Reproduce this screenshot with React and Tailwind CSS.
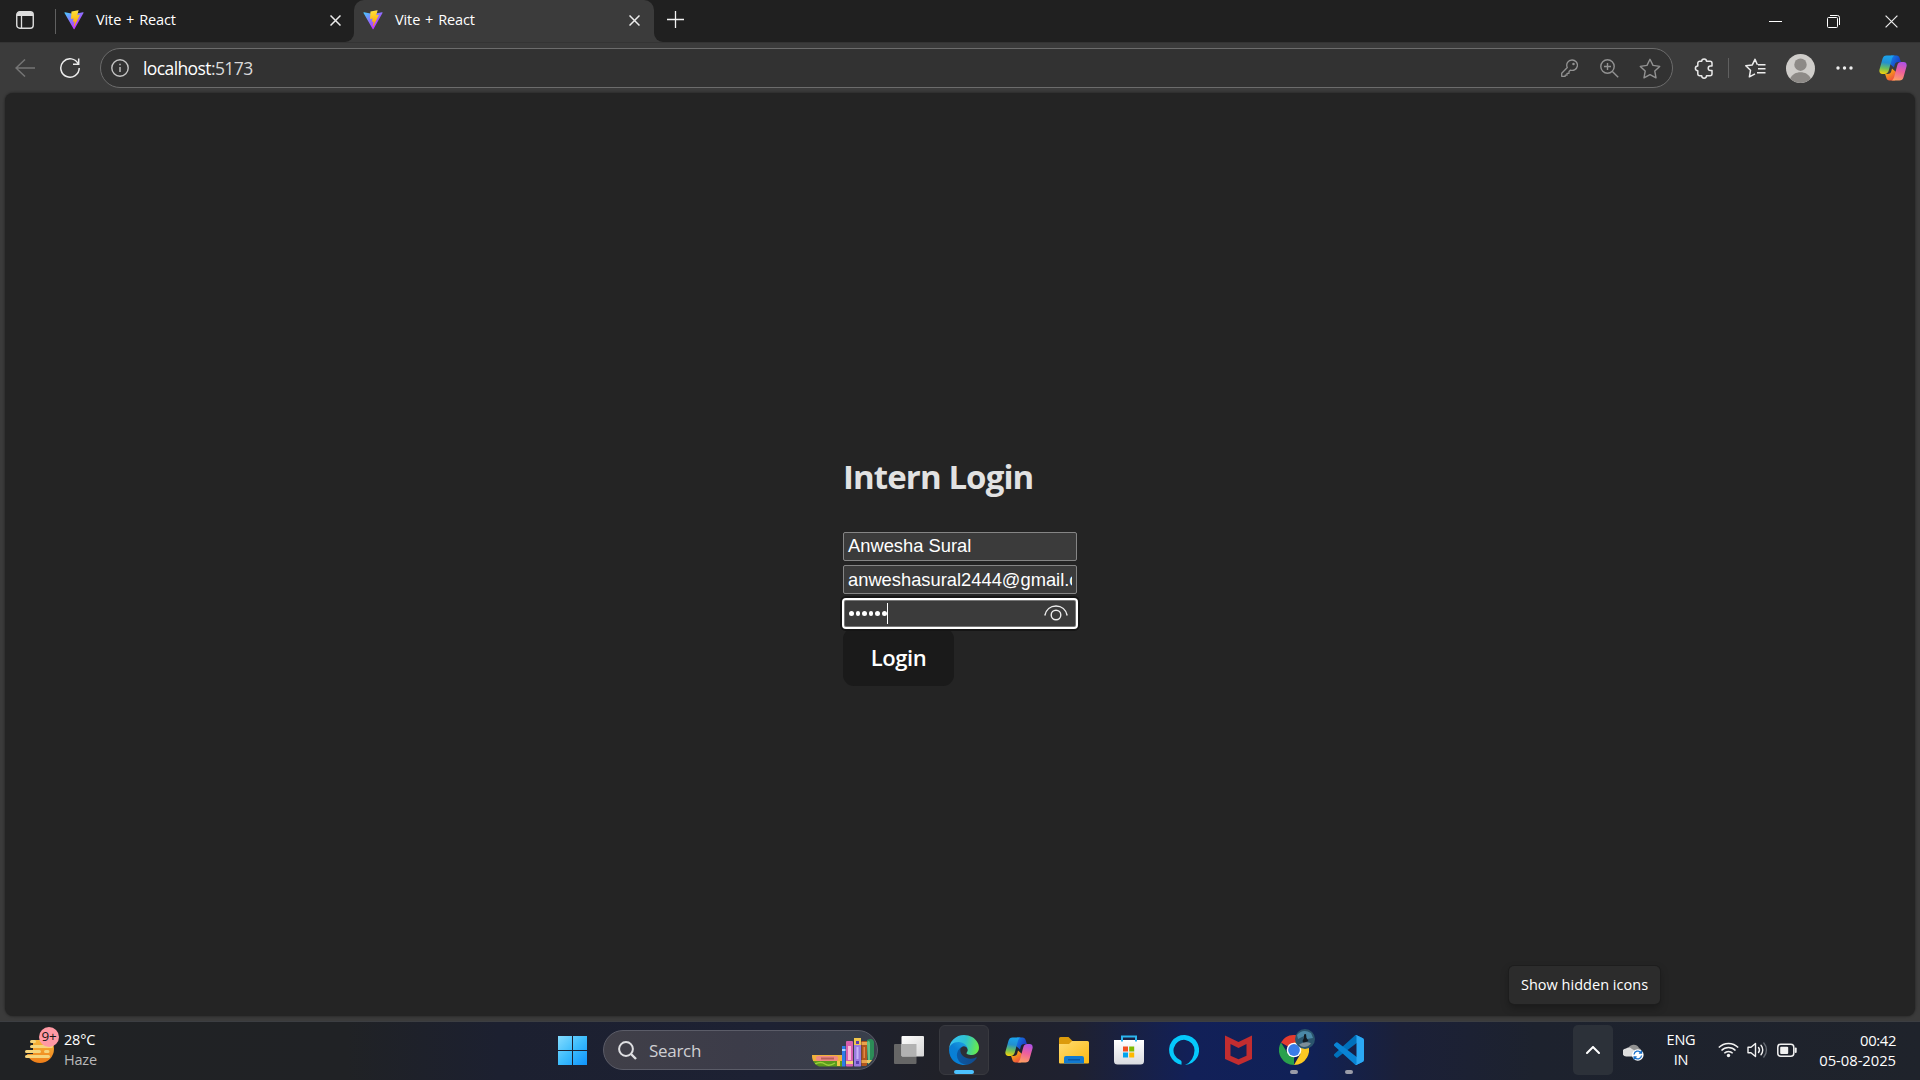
import React from "react";

const UI = "font-['Open_Sans','Noto_Sans',sans-serif]";

function ViteLogo({ id }) {
  return (
    <svg width="20" height="20" viewBox="0 0 410 404" className="shrink-0">
      <defs>
        <linearGradient id={`${id}a`} x1="6" y1="33" x2="235" y2="344" gradientUnits="userSpaceOnUse">
          <stop stopColor="#41D1FF" />
          <stop offset="1" stopColor="#BD34FE" />
        </linearGradient>
        <linearGradient id={`${id}b`} x1="194.651" y1="8.818" x2="236.076" y2="292.989" gradientUnits="userSpaceOnUse">
          <stop stopColor="#FFEA83" />
          <stop offset="0.083" stopColor="#FFDD35" />
          <stop offset="1" stopColor="#FFA800" />
        </linearGradient>
      </defs>
      <path d="M399.641 59.525 215.643 388.545C211.844 395.338 202.084 395.378 198.228 388.618L10.582 59.556C6.381 52.19 12.68 43.267 21.028 44.759L205.223 77.682C206.398 77.892 207.601 77.89 208.776 77.676L389.119 44.806C397.439 43.289 403.768 52.143 399.641 59.525Z" fill={`url(#${id}a)`} />
      <path d="M292.965 1.574 156.801 28.255C154.563 28.694 152.906 30.59 152.771 32.866L144.395 174.33C144.198 177.662 147.258 180.248 150.51 179.498L188.42 170.749C191.967 169.931 195.172 173.055 194.443 176.622L183.18 231.775C182.422 235.487 185.907 238.661 189.532 237.56L212.947 230.446C216.577 229.344 220.065 232.527 219.297 236.242L201.398 322.875C200.278 328.294 207.486 331.249 210.492 326.603L212.5 323.5 323.454 102.072C325.312 98.365 322.108 94.137 318.036 94.923L279.014 102.454C275.347 103.161 272.227 99.746 273.262 96.158L298.731 7.867C299.767 4.273 296.636.855 292.965 1.574Z" fill={`url(#${id}b)`} />
    </svg>
  );
}

function CopilotLogo({ id }) {
  return (
    <svg width="28" height="26" viewBox="0 0 28 26">
      <defs>
        <linearGradient id={`${id}a`} x1="8" y1="0" x2="5" y2="19" gradientUnits="userSpaceOnUse">
          <stop stopColor="#1aa5f0" />
          <stop offset="0.4" stopColor="#2390d0" />
          <stop offset="0.7" stopColor="#6cbf5a" />
          <stop offset="1" stopColor="#f5d20a" />
        </linearGradient>
        <linearGradient id={`${id}b`} x1="23" y1="6" x2="17" y2="26" gradientUnits="userSpaceOnUse">
          <stop stopColor="#a850ee" />
          <stop offset="0.5" stopColor="#ee5f9c" />
          <stop offset="1" stopColor="#ffa45e" />
        </linearGradient>
        <linearGradient id={`${id}c`} x1="14" y1="2" x2="21" y2="6" gradientUnits="userSpaceOnUse">
          <stop stopColor="#1672e0" />
          <stop offset="1" stopColor="#1b3fc4" />
        </linearGradient>
        <linearGradient id={`${id}d`} x1="8" y1="18" x2="13" y2="25" gradientUnits="userSpaceOnUse">
          <stop stopColor="#f6a416" />
          <stop offset="1" stopColor="#f0523c" />
        </linearGradient>
      </defs>
      <path d="M12 .500h5.600c1.600 0 2.600 1 3 2.400l1.300 4.200h-2.700c-1.800 0-3 1-3.500 2.700L15 12.500 11 9Z" fill={`url(#${id}c)`} />
      <path d="M16 25.500h-5.600c-1.600 0-2.600-1-3-2.400l-1.300-4.200h2.700c1.800 0 3-1 3.500-2.700L13 13.500 17 17Z" fill={`url(#${id}d)`} />
      <path d="M7.500.500h8.500c-1.600.200-2.500 1.500-3 3l-3.300 12.200c-.600 2-1.900 3.200-4 3.200H3.400C1 18.900-.100 17 .500 14.500L3.500 3.800C4.100 1.700 5.400.500 7.500.500Z" fill={`url(#${id}a)`} />
      <path d="M20.500 25.500h-8.500c1.600-.200 2.500-1.500 3-3l3.300-12.200c.600-2 1.900-3.200 4-3.200h2.300c2.400 0 3.500 1.900 2.900 4.400l-3 10.700c-.600 2.100-1.900 3.300-4 3.300Z" fill={`url(#${id}b)`} />
    </svg>
  );
}

function CloseIcon({ size = 11, w = 1.5 }) {
  return (
    <svg width={size} height={size} viewBox="0 0 11 11" stroke="#ececec" strokeWidth={w} fill="none">
      <path d="M.5.5l10 10M10.500.500l-10 10" />
    </svg>
  );
}

function TabStrip() {
  return (
    <header className="flex h-[42px] shrink-0 items-start bg-[#202020]">
      <div className="flex h-[42px] w-[55px] items-center pb-[2px] pl-4">
        <svg width="18" height="18" viewBox="0 0 18 18" fill="none">
          <rect x=".75" y=".75" width="16.500" height="16.500" rx="3" stroke="#dedede" strokeWidth="1.400" />
          <path d="M1 3.500Q1 1 3.500 1h11Q17 1 17 3.500V5H1Z" fill="#dedede" />
          <path d="M5.500 5v12" stroke="#dedede" strokeWidth="1.300" />
        </svg>
      </div>
      <div className="mt-[9px] h-[25px] w-px bg-[#606060]" />
      <div className="flex h-[40px] w-[298px] items-center pl-2 pr-[13px]">
        <ViteLogo id="va" />
        <span className={`${UI} ml-3 flex-1 whitespace-nowrap text-[14.5px] leading-5 tracking-[-0.1px] text-white [word-spacing:1.2px]`}>Vite + React</span>
        <CloseIcon />
      </div>
      <div className="relative flex h-[42px] w-[300px] items-center rounded-t-[10px] bg-[#3b3b3b] pb-[2px] pl-[9px] pr-[14px]">
        <div className="absolute -left-[10px] bottom-0 size-[10px] bg-[#3b3b3b]"><div className="size-full rounded-br-[9px] bg-[#202020]" /></div>
        <div className="absolute -right-[10px] bottom-0 size-[10px] bg-[#3b3b3b]"><div className="size-full rounded-bl-[9px] bg-[#202020]" /></div>
        <ViteLogo id="vb" />
        <span className={`${UI} ml-3 flex-1 whitespace-nowrap text-[14.5px] leading-5 tracking-[-0.1px] text-white [word-spacing:1.2px]`}>Vite + React</span>
        <CloseIcon />
      </div>
      <svg className="ml-[13px] mt-[11px]" width="17" height="17" viewBox="0 0 17 17" stroke="#f2f2f2" strokeWidth="1.300"><path d="M8.500 0v17M0 8.500h17" /></svg>
      <div className="ml-auto flex items-center pr-[22px] pt-[15px]">
        <div className="mr-[45px] mt-[-1px] h-px w-[13px] bg-white" />
        <svg className="mr-[45px]" width="13" height="13" viewBox="0 0 13 13" fill="none" stroke="#fff">
          <rect x=".5" y="2.500" width="10" height="10" rx="1" />
          <path d="M3 .5h7.500q2 0 2 2V10" />
        </svg>
        <CloseIcon size={13} w={1.05} />
      </div>
    </header>
  );
}

function Toolbar() {
  return (
    <div className="flex h-[51px] shrink-0 items-center border-t border-[#343434] bg-[#3b3b3b]">
      <svg className="ml-[15px]" width="20" height="18" viewBox="0 0 20 18" fill="none" stroke="#757575" strokeWidth="1.500"><path d="M20 9H1M10 .5 1 9l9 8.500" /></svg>
      <svg className="ml-[25px]" width="20" height="20" viewBox="0 0 20 20" fill="none" stroke="#ededed" strokeWidth="1.500">
        <path d="M18.300 6A9.200 9.200 0 1 0 19.200 10" /><path d="M18.700.500v5.700h-5.700" />
      </svg>
      <div className="ml-5 flex h-[40px] w-[1573px] items-center rounded-full border border-[#6c6c6c] bg-[#323232] pl-[10px] pr-[11px]">
        <svg width="18" height="18" viewBox="0 0 18 18" fill="none" stroke="#c4c4c4" strokeWidth="1.400"><circle cx="9" cy="9" r="8.200" /><path d="M9 8v5M9 4.700v1.600" /></svg>
        <span className={`${UI} -mt-px ml-[14px] flex-1 whitespace-nowrap text-[17.5px] leading-6 tracking-[-0.6px] text-[#d9d9d9]`}>
          <span className="text-white">localhost</span>:5173
        </span>
        <svg width="17" height="18" viewBox="0 0 17 18" fill="none" stroke="#929292" strokeWidth="1.300" strokeLinejoin="round">
          <path d="M11 1a5.200 5.200 0 1 1-1.500 10.100L8 12.500v1.800H6v1.900H4.200v1.100H.700v-3l5.600-5.800A5.200 5.200 0 0 1 11 1Z" /><circle cx="12.500" cy="5" r=".6" fill="#929292" />
        </svg>
        <svg className="ml-[22px]" width="19" height="19" viewBox="0 0 19 19" fill="none" stroke="#929292" strokeWidth="1.400"><circle cx="7.500" cy="7.500" r="6.700" /><path d="m12.400 12.400 5.800 5.800M7.500 4v7M4 7.500h7" /></svg>
        <svg className="ml-[20px]" width="22" height="21" viewBox="0 0 22 21" fill="none" stroke="#929292" strokeWidth="1.400" strokeLinejoin="round"><path d="m11 1.300 3 6.100 6.700 1-4.900 4.700 1.200 6.700-6-3.200-6 3.200 1.200-6.700L1.300 8.400l6.700-1Z" /></svg>
      </div>
      <svg className="ml-[21px]" width="20" height="21" viewBox="0 0 20 21" fill="none" stroke="#e8e8e8" strokeWidth="1.500" strokeLinejoin="round">
        <path d="M5.800 3.300H7.700a2.400 2.400 0 0 1 4.800 0H16a2 2 0 0 1 2 2V8H16.500a2.300 2.300 0 0 0 0 4.600H18V15.800a2 2 0 0 1-2 2H12.500a2.400 2.400 0 0 1-4.800 0H5.800a2 2 0 0 1-2-2V12.700a2.400 2.400 0 0 1 0-4.800V5.300a2 2 0 0 1 2-2Z" />
      </svg>
      <div className="ml-[14px] h-5 w-px bg-[#606060]" />
      <svg className="ml-[16px]" width="21" height="20" viewBox="0 0 21 20" fill="none" stroke="#ededed" strokeWidth="1.500" strokeLinejoin="round">
        <path d="M12.400 6.700 10 1.300 7.300 6.900l-6.500.900 4.700 4.500-1.100 6.500 5.600-2.900M13 6.700h7.500M13 10.700h7.500M12 14.700h8.500" />
      </svg>
      <svg className="ml-5" width="29" height="29" viewBox="0 0 28 28">
        <circle cx="14" cy="14" r="14" fill="#cfcdca" /><circle cx="14" cy="10.300" r="6" fill="#8d8a87" /><path d="M4 23.700c2-4 5.700-6 10-6s8 2 10 6a14 14 0 0 1-20 0Z" fill="#8d8a87" />
      </svg>
      <svg className="ml-[21px]" width="17" height="4" viewBox="0 0 17 4" fill="#eee"><circle cx="2" cy="2" r="1.700" /><circle cx="8.500" cy="2" r="1.700" /><circle cx="15" cy="2" r="1.700" /></svg>
      <div className="ml-[26px]"><CopilotLogo id="ca" /></div>
    </div>
  );
}

function LoginForm() {
  const field = "flex h-[29px] w-[234px] items-center overflow-hidden rounded-[2px] border border-[#858585] bg-[#3b3b3b] px-1 font-['Liberation_Sans',Arial,sans-serif] text-[18.33px] leading-[26px] text-white";
  return (
    <main className="flex flex-1 flex-col rounded-lg bg-[#242424] pl-[838px] pt-[354px] shadow-[0_0_3px_rgba(0,0,0,0.5)]">
      <h2 className={`${UI} h-[85px] whitespace-nowrap text-[33px] font-bold leading-[60px] tracking-[-0.9px] text-[#e2e2e2]`}>Intern Login</h2>
      <div className={`${field}`}><span className="-mt-[2px] whitespace-nowrap">Anwesha Sural</span></div>
      <div className={`${field} mt-[4px]`}><div className="w-full overflow-hidden whitespace-nowrap">anweshasural2444@gmail.com</div></div>
      <div className="relative z-10 mt-[4px] flex h-[31px] w-[236px] -translate-x-px items-center rounded-[4px] border-2 border-white bg-[#3b3b3b] pl-[5px] shadow-[inset_0_0_0_1px_#777,0_0_0_2px_#151515]">
        <div className="flex gap-[2px]">
          {[0, 1, 2, 3, 4, 5].map((i) => <i key={i} className="size-[4.600px] rounded-full bg-white" />)}
        </div>
        <div className="h-[21px] w-px bg-white" />
        <svg className="-mt-px ml-auto mr-[8px]" width="24" height="16" viewBox="0 0 24 16" fill="none" stroke="#ededed" strokeWidth="1.400"><path d="M.800 10.500C2 4.500 6.500 1 12 1s10 3.500 11.200 9.500" /><circle cx="12" cy="10" r="4.800" /></svg>
      </div>
      <button type="button" className={`${UI} -mt-px h-[58px] w-[111px] rounded-[11px] bg-[#1a1a1a] text-[22px] font-semibold tracking-[-0.4px] text-white`}>Login</button>
    </main>
  );
}

function Books() {
  return (
    <svg width="63" height="30" viewBox="0 0 63 30">
      <defs><clipPath id="pill"><path d="M0 0h63v12c0 9-6 14-10 16.500H7C3 27 0 23 0 18Z" /></clipPath></defs>
      <g clipPath="url(#pill)">
        <rect x="0" y="17" width="30" height="6" fill="#f2b13c" /><rect x="4" y="18" width="22" height="5" rx="2" fill="#f08a82" /><rect x="9" y="19.500" width="13" height="2" fill="#b9605c" />
        <rect x="1" y="23" width="29" height="6" fill="#5a9a1c" /><path d="M3 26q6-3 10 0t10-1" stroke="#9bd03c" strokeWidth="1.500" fill="none" /><rect x="25" y="23" width="3" height="5" fill="#f3c749" />
        <rect x="30" y="8" width="3.500" height="21" fill="#2f7be8" /><rect x="30" y="11" width="3.500" height="2" fill="#a8d3ff" />
        <rect x="34" y="3" width="7" height="26" rx="1" fill="#d95fae" /><rect x="36" y="8" width="3" height="14" fill="#f8b9d9" /><rect x="34" y="23" width="7" height="3" fill="#f5d275" />
        <rect x="42" y="0" width="7" height="29" rx="1" fill="#9b7be0" /><rect x="42" y="0" width="7" height="7" fill="#f1c64c" /><rect x="44" y="3" width="3" height="3" fill="#5c3eb0" /><rect x="44.500" y="9" width="2" height="12" fill="#c8b3f7" /><rect x="44" y="23" width="3" height="3" fill="#5c3eb0" />
        <rect x="49.500" y="3" width="5.500" height="25" fill="#b1571d" /><rect x="49.500" y="4" width="5.500" height="3" fill="#e8a34d" /><rect x="49.500" y="22" width="5.500" height="3" fill="#e8a34d" /><rect x="51.500" y="9" width="1.500" height="11" fill="#e08b48" />
        <path d="M55 2q6-3 7 2v20l-6 3Z" fill="#2c8c57" /><path d="M55 4q3-3 3 2v19l-2 2Z" fill="#64c286" /><path d="M55 22h5v3h-5Z" fill="#e8c765" />
      </g>
    </svg>
  );
}

function Cell({ children, mark }) {
  return (
    <div className="relative flex h-[50px] w-[55px] shrink-0 items-center justify-center">
      {children}
      {mark && <i className="absolute bottom-[1px] h-[4px] w-[8px] rounded-full bg-[#9a9ca8]" />}
    </div>
  );
}

function Taskbar() {
  return (
    <footer className={`${UI} flex h-[59px] shrink-0 items-start border-t border-[#3c3e42] bg-[linear-gradient(90deg,#202224_0%,#202225_18%,#1c2030_26%,#1d2133_40%,#202128_49%,#1f2130_56%,#122058_62%,#102157_68%,#1b2038_73%,#1d222e_80%,#1f232b_100%)] pt-[3px] text-white`}>
      <div className="flex w-[545px] pl-6 pt-[3px]">
        <div className="relative h-[36px] w-[40px]">
          <svg width="36" height="38" viewBox="0 0 36 38">
            <defs><linearGradient id="sun" x1="0" y1="0" x2="0" y2="1"><stop stopColor="#f9c343" /><stop offset="1" stopColor="#ee7d18" /></linearGradient></defs>
            <circle cx="16" cy="21" r="14" fill="url(#sun)" />
            <path d="M0 0h36v12H0ZM0 12h9v14H0Z" fill="#202224" />
            <path d="M7.500 13.500h3M7.500 18.500h20M2.500 23.500h13M21.500 23.500h2.500M2.500 28.500h22" stroke="#f6d57c" strokeWidth="3" strokeLinecap="round" />
          </svg>
          <span className="absolute -top-px left-[15px] flex size-5 items-center justify-center rounded-full bg-[#ff99a4] text-[13.5px] leading-none tracking-[-0.3px] text-[#161616]">9+</span>
        </div>
        <div className="flex flex-col whitespace-nowrap pt-[2px] text-[14.5px] leading-5 tracking-[-0.2px]">
          <span>28°C</span><span className="text-[#b9b9ba]">Haze</span>
        </div>
      </div>
      <Cell>
        <svg width="29" height="29" viewBox="0 0 29 29">
          <defs><linearGradient id="win" x1="0" y1="0" x2="1" y2="1"><stop stopColor="#85dcff" /><stop offset=".5" stopColor="#3cbcfc" /><stop offset="1" stopColor="#0f93fb" /></linearGradient></defs>
          <path d="M0 0h14v14H0ZM15 0h14v14H15ZM0 15h14v14H0ZM15 15h14v14H15Z" fill="url(#win)" />
        </svg>
      </Cell>
      <div className="ml-[3px] mr-[3.5px] mt-[5px] flex h-[40px] w-[275px] items-center rounded-full border border-[#5b5c68] bg-[linear-gradient(90deg,#403f48,#3c3c49_50%,#393f4c)] pl-[14px] pr-[2px]">
        <svg width="19" height="19" viewBox="0 0 19 19" fill="none" stroke="#dfdfe2" strokeWidth="2"><circle cx="8" cy="8" r="6.900" /><path d="m13 13 5 5" strokeWidth="2.400" /></svg>
        <span className="ml-[12px] mt-[2px] flex-1 text-[17px] leading-6 tracking-[-0.3px] text-[#cfcfd3]">Search</span>
        <div className="translate-y-[3px]"><Books /></div>
      </div>
      <Cell>
        <svg width="30" height="28" viewBox="0 0 30 28">
          <defs><linearGradient id="tv" x1="0" y1="0" x2="1" y2="1"><stop stopColor="#fff" /><stop offset="1" stopColor="#d5d5d5" /></linearGradient></defs>
          <rect x="0" y="8" width="22.500" height="20" rx="1" fill="#666" /><rect x="7.500" y="0" width="22.500" height="20.500" rx="1" fill="url(#tv)" /><rect x="7.500" y="8" width="15" height="12" fill="#b2b2b2" />
        </svg>
      </Cell>
      <Cell>
        <div className="relative flex size-[50px] items-center justify-center rounded-[6px] border border-[#38393f] bg-[#2d2e36]">
          <svg width="30" height="30" viewBox="0 0 256 256">
            <defs>
              <linearGradient id="e1" x1="63" y1="177" x2="241" y2="177" gradientUnits="userSpaceOnUse"><stop stopColor="#0c59a4" /><stop offset="1" stopColor="#114a8b" /></linearGradient>
              <linearGradient id="e2" x1="157" y1="94" x2="46" y2="222" gradientUnits="userSpaceOnUse"><stop stopColor="#1b9de2" /><stop offset=".5" stopColor="#0b7fd4" /><stop offset="1" stopColor="#0680d7" /></linearGradient>
              <linearGradient id="e3" x1="20" y1="60" x2="245" y2="110" gradientUnits="userSpaceOnUse"><stop stopColor="#35c1f1" /><stop offset=".5" stopColor="#2fc2cf" /><stop offset="1" stopColor="#66eb4e" /></linearGradient>
            </defs>
            <path fill="url(#e1)" d="M231 190.500c-3.400 1.800-6.900 3.400-10.500 4.700a101.700 101.700 0 0 1-35.900 6.500c-47.300 0-88.500-32.500-88.500-74.300a31.500 31.500 0 0 1 16.400-27.300c-42.800 1.800-53.800 46.400-53.800 72.500 0 73.900 68.100 81.400 82.800 81.400 7.900 0 19.800-2.300 27-4.600l1.300-.4a128.300 128.300 0 0 0 66.600-52.800 4 4 0 0 0-5.400-5.700Z" />
            <path fill="url(#e2)" d="M105.700 241.400a79.200 79.200 0 0 1-22.700-21.300 80.700 80.700 0 0 1 29.500-120c3.200-1.500 8.500-4.100 15.600-4a32.400 32.400 0 0 1 25.700 13 31.900 31.900 0 0 1 6.300 18.700c0-.2 24.500-79.600-80-79.600-43.900 0-80 41.700-80 78.200a130.200 130.200 0 0 0 12.100 56 128 128 0 0 0 156.400 67.100 75.500 75.500 0 0 1-62.800-8Z" />
            <path fill="url(#e3)" d="M152.300 148.900c-.9 1-3.400 2.500-3.400 5.600 0 2.600 1.700 5.200 4.800 7.300 14.300 10 41.400 8.600 41.500 8.600a59.600 59.600 0 0 0 30.300-8.300 61.400 61.400 0 0 0 30.400-52.900c.3-22.400-8-37.300-11.300-43.900C223.500 23.900 177.700 0 128 0A128 128 0 0 0 0 126.200c.5-36.500 36.800-66 80-66 3.500 0 23.500.3 42 10.100 16.300 8.600 24.900 18.900 30.800 29.200 6.200 10.700 7.300 24.100 7.300 29.500 0 5.300-2.700 13.300-7.800 19.900Z" />
          </svg>
          <i className="absolute bottom-0 h-[4px] w-5 rounded-full bg-[#4cc2ff]" />
        </div>
      </Cell>
      <Cell><CopilotLogo id="cb" /></Cell>
      <Cell>
        <svg className="mt-[1px]" width="30" height="27" viewBox="0 0 30 27">
          <defs><linearGradient id="fo" x1="0" y1="0" x2="1" y2="1"><stop stopColor="#ffdc72" /><stop offset="1" stopColor="#fcb912" /></linearGradient></defs>
          <path d="M0 1.500Q0 0 1.500 0h8l4 4H28v8H0Z" fill="#dc9b0c" /><path d="M0 7h10l3-3h15.500Q30 4 30 5.500V25.500Q30 26.500 29 26.500H1Q0 26.500 0 25.500Z" fill="url(#fo)" />
          <path d="M5 26.500V21q0-2 2-2h16q2 0 2 2v5.500Z" fill="#127ad0" /><path d="M9 22.800h12" stroke="#0a539f" strokeWidth="1.300" />
        </svg>
      </Cell>
      <Cell>
        <svg width="30" height="30" viewBox="0 0 30 30">
          <defs><linearGradient id="st" x1="0" y1="0" x2="0" y2="1"><stop stopColor="#fff" /><stop offset="1" stopColor="#d9dbe0" /></linearGradient></defs>
          <path d="M0 5h30V26q0 3.500-3.500 3.500h-23Q0 29.500 0 26Z" fill="url(#st)" /><path d="M8 6.500V1.500h14v5" fill="none" stroke="#2cb5ef" strokeWidth="2" />
          <path d="M9 11.500h5v5H9Z" fill="#f25022" /><path d="M15.200 11.500h5v5h-5Z" fill="#7fba00" /><path d="M9 17.500h5v5H9Z" fill="#00a4ef" /><path d="M15.200 17.500h5v5h-5Z" fill="#ffb900" />
        </svg>
      </Cell>
      <Cell>
        <svg width="30" height="30" viewBox="0 0 30 30"><path d="M12.500 29.800A15 15 0 1 1 16 30Q25 26 25.500 15.500A10.500 10.500 0 1 0 11.500 25.200Q12.600 25.700 12.600 27Z" fill="#05c8fb" /></svg>
      </Cell>
      <Cell>
        <svg className="-ml-px" width="27" height="30" viewBox="0 0 27 30"><path d="M0 .500 13.500 7 27 .500V24L13.500 30 0 24ZM5.500 9v11.700l8 3.600 8-3.600V9l-8 4Z" fill="#c22d30" fillRule="evenodd" /></svg>
      </Cell>
      <Cell mark>
        <svg width="30" height="30" viewBox="0 0 30 30">
          <path d="M15 15 2 7.500A15 15 0 0 1 28 7.500Z" fill="#e33b2e" /><path d="M15 15 15 30A15 15 0 0 1 2 7.500L8.800 18.600Z" fill="#2aa14c" /><path d="M15 15V7.500h13A15 15 0 0 1 15 30L21.500 18.700Z" fill="#fcc822" />
          <circle cx="15" cy="15" r="7.300" fill="#fff" /><circle cx="15" cy="15" r="5.900" fill="#3a7ce8" />
        </svg>
        <svg className="absolute left-[28.500px] top-[4px]" width="20" height="20" viewBox="0 0 20 20">
          <circle cx="10" cy="10" r="10" fill="#2b556d" /><path d="M2 6Q8-1 16 4l2 5-6 1-3-3-6 3Z" fill="#4a88a6" /><path d="M9 5.500 11 5l.5 4 2 3-5 2-1-2 1.500-3Z" fill="#131a22" /><path d="M4 15.500q5-3 10-2l2 1q-3 3.500-7 3.500-3 0-5-2.500Z" fill="#7c8e98" />
        </svg>
      </Cell>
      <Cell mark>
        <svg width="30" height="30" viewBox="0 0 100 100">
          <path d="M96.500 10.800 75.900.9a6.200 6.200 0 0 0-7.100 1.200L1.300 63.600a4.200 4.200 0 0 0 0 6.200l5.500 5a4.200 4.200 0 0 0 5.300.200L93.400 13.400A4.100 4.100 0 0 1 100 16.700v-.300a6.300 6.300 0 0 0-3.500-5.600Z" fill="#0071bb" />
          <path d="M96.500 89.200 75.900 99.100a6.200 6.200 0 0 1-7.100-1.200L1.300 36.400a4.200 4.200 0 0 1 0-6.200l5.500-5a4.200 4.200 0 0 1 5.300-.200L93.400 86.600A4.100 4.100 0 0 0 100 83.300v.3a6.300 6.300 0 0 1-3.500 5.600Z" fill="#0a84d4" />
          <path d="M75.900 99.100a6.200 6.200 0 0 1-7.100-1.200c2.300 2.300 6.200.7 6.200-2.600V4.700c0-3.300-3.900-4.900-6.200-2.600A6.200 6.200 0 0 1 75.900.900l20.600 9.900a6.300 6.300 0 0 1 3.500 5.600v67.200a6.300 6.300 0 0 1-3.500 5.600Z" fill="#2ba8f4" />
        </svg>
      </Cell>
      <div className="ml-auto flex h-[50px] items-center pr-6">
        <div className="flex h-[50px] w-10 items-center justify-center rounded-[5px] bg-[#2c3139]">
          <svg width="14" height="8" viewBox="0 0 14 8" fill="none" stroke="#fff" strokeWidth="2" strokeLinecap="round"><path d="m1 7 6-6 6 6" /></svg>
        </div>
        <svg className="ml-[10px] mt-[3px]" width="21" height="18" viewBox="0 0 21 18">
          <path d="M5 6a6 6 0 0 1 11-1 4 4 0 0 1 1 7H6Z" fill="#929292" /><path d="M4 13.500A4 4 0 0 1 3 5.500q3-2 6 .5l7 4v3.500Z" fill="#dedede" />
          <circle cx="14.800" cy="12" r="5.800" fill="#fff" /><path d="M11 11.500a4 4 0 0 1 7-2M18.600 12.500a4 4 0 0 1-7 2M18.500 7.500v2.600h-2.600M11.100 16.500v-2.600h2.600" fill="none" stroke="#176fc9" strokeWidth="1.300" />
        </svg>
        <div className="-mt-px ml-[22px] flex w-[30px] flex-col items-center text-[14.5px] leading-5 tracking-[-0.2px]"><span>ENG</span><span>IN</span></div>
        <svg className="ml-[22px]" width="21" height="16" viewBox="0 0 21 16" fill="none" stroke="#f1f1f1" strokeWidth="1.500">
          <path d="M.800 5.500a13.700 13.700 0 0 1 19.400 0M3.500 8.500a9.800 9.800 0 0 1 14 0M6.300 11.300a6 6 0 0 1 8.400 0" /><circle cx="10.500" cy="13.500" r="1.700" fill="#f1f1f1" stroke="none" />
        </svg>
        <svg className="ml-[8px]" width="21" height="18" viewBox="0 0 21 18" fill="none" stroke="#f1f1f1" strokeWidth="1.400" strokeLinejoin="round" strokeLinecap="round">
          <path d="M1 6.300h3L8.500 2.500v13L4 11.700H1ZM11.500 6.500a4 4 0 0 1 0 5M14 4.300a7.200 7.200 0 0 1 0 9.400" /><path d="M16.800 2a10.600 10.600 0 0 1 0 14" stroke="#666b73" />
        </svg>
        <svg className="ml-[9px]" width="20" height="15" viewBox="0 0 20 15" fill="none">
          <rect x=".8" y="1.300" width="16" height="12" rx="3" stroke="#f1f1f1" strokeWidth="1.500" /><rect x="3.200" y="3.700" width="8" height="7.300" rx="1" fill="#f1f1f1" /><path d="M18.700 5.500v3.500" stroke="#f1f1f1" strokeWidth="2" strokeLinecap="round" />
        </svg>
        <div className="-mt-px ml-[21px] flex w-[78px] flex-col items-end whitespace-nowrap text-[14.8px] leading-5 tracking-[-0.05px]"><span className="tracking-[-0.35px]">00:42</span><span>05-08-2025</span></div>
      </div>
    </footer>
  );
}

export default function App() {
  return (
    <div className="relative flex h-[1080px] w-[1920px] flex-col overflow-hidden bg-[#3b3b3b]">
      <TabStrip />
      <Toolbar />
      <div className="flex flex-1 px-[5px] pb-[5px]"><LoginForm /></div>
      <Taskbar />
      <div className={`${UI} absolute left-[1509px] top-[966px] flex h-[38px] w-[151px] items-center justify-center whitespace-nowrap rounded-[5px] bg-[#2c2c2c] text-[14.5px] tracking-[0.02px] text-white shadow-[0_0_0_1px_#1d1d1d,0_4px_8px_rgba(0,0,0,0.3)]`}>Show hidden icons</div>
    </div>
  );
}
